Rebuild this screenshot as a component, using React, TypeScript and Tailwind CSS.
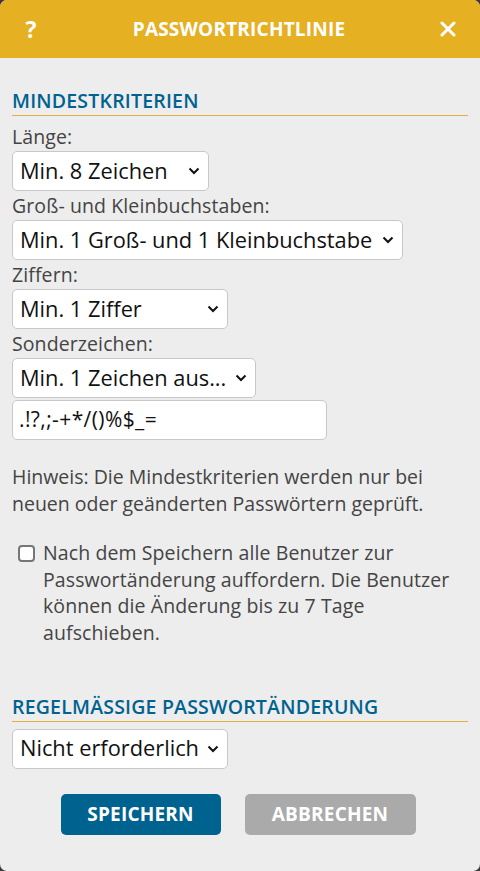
import React from 'react'

const font = { fontFamily: '"Open Sans", "Noto Sans", sans-serif' }

const Chevron = () => (
  <svg width="12" height="8" viewBox="0 0 12 8" className="shrink-0">
    <path d="M1.5 1.5 L6 6 L10.5 1.5" fill="none" stroke="#111" strokeWidth="2" />
  </svg>
)

const FakeSelect = ({ value, width }: { value: string; width: string }) => (
  <div
    className={`${width} h-[40px] flex items-center justify-between pl-[7px] pr-[8px] bg-white border border-[#c8c8c8] rounded-[5px] text-[21.8px] text-[#111] whitespace-nowrap overflow-hidden`}
  >
    <span>{value}</span>
    <Chevron />
  </div>
)

const Label = ({ children }: { children: React.ReactNode }) => (
  <div className="text-[19.5px] leading-[29px] text-[#444] tracking-[0.1px]">{children}</div>
)

const SectionTitle = ({ children }: { children: React.ReactNode }) => (
  <h2 className="text-[19.5px] leading-[24px] font-semibold text-[#00628f] pb-[2px] border-b border-[#e0b040] tracking-[0.2px]">
    {children}
  </h2>
)

const App = () => {
  return (
    <div className="w-[480px] h-[871px] bg-[#3a3a3a]" style={font}>
      <div className="w-full h-full bg-[#ededed] rounded-[7px] overflow-hidden flex flex-col">
        <header className="h-[58px] bg-[#e5b022] flex items-center justify-between px-[24px] text-white">
          <span className="text-[23px] font-bold w-[14px] text-center">?</span>
          <span className="text-[19px] font-bold tracking-[0.2px]">PASSWORTRICHTLINIE</span>
          <svg width="16" height="16" viewBox="0 0 16 16">
            <path d="M2 2 L14 14 M14 2 L2 14" stroke="#fff" strokeWidth="3" strokeLinecap="round" />
          </svg>
        </header>

        <main className="px-[12px] pt-[31px]">
          <SectionTitle>MINDESTKRITERIEN</SectionTitle>
          <div className="mt-[6px]">
            <Label>Länge:</Label>
            <FakeSelect value="Min. 8 Zeichen" width="w-[197px]" />
            <Label>Groß- und Kleinbuchstaben:</Label>
            <FakeSelect value="Min. 1 Groß- und 1 Kleinbuchstabe" width="w-[391px]" />
            <Label>Ziffern:</Label>
            <FakeSelect value="Min. 1 Ziffer" width="w-[216px]" />
            <Label>Sonderzeichen:</Label>
            <FakeSelect value="Min. 1 Zeichen aus..." width="w-[244px]" />
            <div className="w-[315px] h-[40px] mt-[2px] flex items-center px-[6px] bg-white border border-[#c8c8c8] rounded-[5px] text-[21px] tracking-[0.4px] text-[#111]">
              .!?,;-+*/()%$_=
            </div>
          </div>

          <p className="mt-[23px] text-[19.5px] leading-[27px] text-[#444]">
            Hinweis: Die Mindestkriterien werden nur bei neuen oder geänderten Passwörtern geprüft.
          </p>

          <label className="mt-[23px] flex items-start gap-[8px] pl-[6px]">
            <span className="mt-[5px] w-[17px] h-[17px] shrink-0 bg-white border-2 border-[#767676] rounded-[4px]" />
            <span className="text-[19.5px] leading-[26.7px] text-[#444] tracking-[0.1px]">
              Nach dem Speichern alle Benutzer zur Passwortänderung auffordern. Die Benutzer können die Änderung bis zu 7 Tage aufschieben.
            </span>
          </label>

          <div className="mt-[48px]">
            <SectionTitle>REGELMÄSSIGE PASSWORTÄNDERUNG</SectionTitle>
          </div>
          <div className="mt-[7px]">
            <FakeSelect value="Nicht erforderlich" width="w-[216px]" />
          </div>

          <div className="mt-[25px] flex justify-center gap-[24px] pr-[4px]">
            <button className="w-[160px] h-[41px] rounded-[5px] bg-[#00628f] text-white text-[19px] font-bold tracking-[0.2px]">
              SPEICHERN
            </button>
            <button className="w-[171px] h-[41px] rounded-[5px] bg-[#aaaaaa] text-white text-[19px] font-bold tracking-[0.2px]">
              ABBRECHEN
            </button>
          </div>
        </main>
      </div>
    </div>
  )
}

export default App
